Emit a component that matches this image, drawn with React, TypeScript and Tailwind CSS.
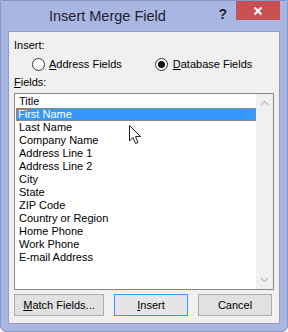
import React from 'react';

const FIELDS = [
  'Title',
  'First Name',
  'Last Name',
  'Company Name',
  'Address Line 1',
  'Address Line 2',
  'City',
  'State',
  'ZIP Code',
  'Country or Region',
  'Home Phone',
  'Work Phone',
  'E-mail Address',
];

function Radio({ checked }: { checked?: boolean }) {
  return (
    <span className="w-[13px] h-[13px] rounded-full border border-[#333] bg-white flex items-center justify-center shrink-0">
      {checked && <span className="w-[7px] h-[7px] rounded-full bg-[#111]" />}
    </span>
  );
}

function Chevron({ up }: { up?: boolean }) {
  return (
    <svg width="9" height="6" viewBox="0 0 9 6" className="text-[#c2c2c2]">
      <path d={up ? 'M1 5 L4.5 1.5 L8 5' : 'M1 1 L4.5 4.5 L8 1'} fill="none" stroke="currentColor" strokeWidth="1.4" />
    </svg>
  );
}

export default function App() {
  return (
    <div
      className="w-[288px] h-[332px] bg-[#a9b6e1] border border-[#8797cc] rounded-b-[6px] flex flex-col text-[11px] text-black overflow-hidden relative"
      style={{ fontFamily: '"Liberation Sans", Arial, sans-serif' }}
    >
      {/* Title bar */}
      <div className="h-[30px] flex items-start shrink-0">
        <div className="flex-1 pl-[48px] pt-[5px] text-[14.5px] text-[#1f2233] leading-[20px]">Insert Merge Field</div>
        <div className="pt-[3px] pr-[9px] font-bold text-[14px] text-[#222]">?</div>
        <div className="w-[44px] h-[19px] mr-[7px] bg-[#c75050] flex items-center justify-center">
          <svg width="10" height="10" viewBox="0 0 10 10">
            <path d="M1.5 1.5 L8.5 8.5 M8.5 1.5 L1.5 8.5" stroke="white" strokeWidth="2" />
          </svg>
        </div>
      </div>

      {/* Client area */}
      <div className="mx-[7px] mb-[7px] flex-1 bg-[#f0f0f0] border border-[#8f9dcc] px-[5px] flex flex-col">
        <div className="mt-[6px] leading-[15px]">Insert:</div>
        <div className="mt-[2px] flex items-center h-[18px] pl-[18px]">
          <Radio />
          <span className="ml-[4px]">
            <span className="underline">A</span>ddress Fields
          </span>
          <span className="ml-[33px]">
            <Radio checked />
          </span>
          <span className="ml-[5px]">
            <span className="underline">D</span>atabase Fields
          </span>
        </div>
        <div className="mt-[2px] leading-[15px]">
          <span className="underline">F</span>ields:
        </div>

        {/* List box */}
        <div className="mt-[3px] h-[197px] w-[260px] border border-[#828790] bg-white flex">
          <div className="flex-1 pt-[1px] pl-[1px]">
            {FIELDS.map((f, i) => (
              <div
                key={f}
                className={
                  i === 1
                    ? 'h-[13px] leading-[13px] pl-[2px] bg-[#3399ff] text-white outline-1 outline-dotted outline-[#d8781e] -outline-offset-1'
                    : 'h-[13px] leading-[13px] pl-[3px]'
                }
              >
                {f}
              </div>
            ))}
          </div>
          <div className="w-[17px] bg-[#f0f0f0] flex flex-col items-center justify-between py-[6px]">
            <Chevron up />
            <Chevron />
          </div>
        </div>

        {/* Buttons */}
        <div className="mt-[4px] flex gap-[10px] h-[22px]">
          <button className="w-[90px] border border-[#adadad] bg-[#e1e1e1]">
            <span className="underline">M</span>atch Fields...
          </button>
          <button className="w-[74px] border border-[#3399ff] bg-[#e5e5e5]">
            <span className="underline">I</span>nsert
          </button>
          <button className="w-[74px] border border-[#adadad] bg-[#e1e1e1]">Cancel</button>
        </div>
      </div>

      {/* Mouse pointer */}
      <svg className="absolute left-[128px] top-[124px]" width="13" height="20" viewBox="0 0 13 20">
        <path
          d="M0.5 0.5 L0.5 16 L4 12.5 L6.5 18.5 L9 17.5 L6.5 11.5 L11.5 11.5 Z"
          fill="white"
          stroke="#222"
          strokeWidth="1"
          strokeLinejoin="round"
        />
      </svg>
    </div>
  );
}
